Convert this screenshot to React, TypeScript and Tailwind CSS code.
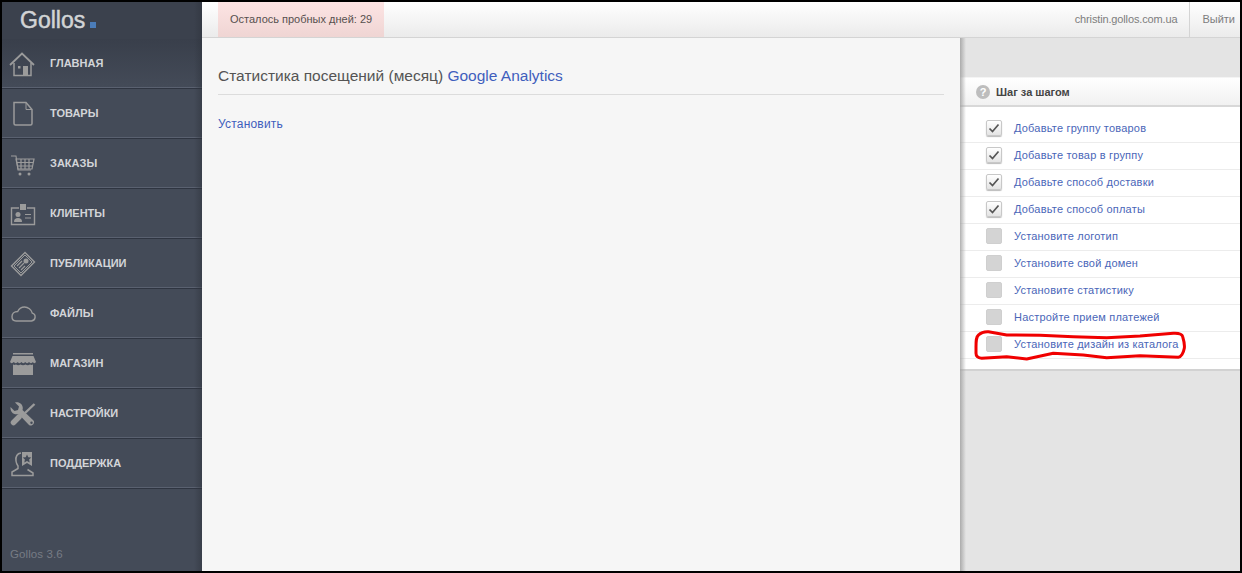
import type { ReactNode } from 'react';

const iconProps = {
  width: 30,
  height: 30,
  viewBox: '0 0 30 30',
  fill: 'none',
  stroke: '#9b9b9b',
  strokeWidth: 1.4,
};

const HomeIcon = () => (
  <svg {...iconProps}>
    <path d="M2 16 14 4.500 26 16" strokeWidth={1.8} />
    <path d="M6 14v12.500h17V14" strokeWidth={1.5} />
    <path d="M15 17h5v9.500h-5zM10 17h2.500v2.500H10z" fill="#9b9b9b" stroke="none" />
  </svg>
);

const FileIcon = () => (
  <svg {...iconProps}>
    <path d="M6 3.500h12l6 7v14a1.500 1.500 0 0 1-1.500 1.500H7.500A1.500 1.500 0 0 1 6 24.500z" strokeWidth={1.5} />
    <path d="M18 3.500v7h6" strokeWidth={1} />
  </svg>
);

const CartIcon = () => (
  <svg {...iconProps}>
    <path d="M3 7h5l2 14h13" strokeWidth={1.1} />
    <path d="M8 10h18l-2 10H10zM8.500 13.500h17M9 17h16M13 10v10M17 10v10M21 10v10" strokeWidth={1.2} />
    <circle cx="12" cy="25" r="1.500" fill="#9b9b9b" stroke="none" />
    <circle cx="21" cy="25" r="1.500" fill="#9b9b9b" stroke="none" />
  </svg>
);

const ClientIcon = () => (
  <svg {...iconProps}>
    <path d="M11 9H3.500v16.500h23V9H19" strokeWidth={1.4} />
    <rect x="12" y="5" width="6" height="6" fill="#9b9b9b" stroke="none" />
    <circle cx="10" cy="15.500" r="2.500" fill="#9b9b9b" stroke="none" />
    <path d="M6 23c0-3 1.500-4 4-4s4 1 4 4z" fill="#9b9b9b" stroke="none" />
    <path d="M17 15.500h6M17 19h6" strokeWidth={1.2} />
  </svg>
);

const TicketIcon = () => (
  <svg {...iconProps}>
    <path d="M3.500 17 17 3.500l9.500 9.500L13 26.500z" strokeWidth={1.4} />
    <path d="M6 17 17 6l7 7-11 11z" strokeWidth={1} />
    <circle cx="18" cy="12" r="2.500" fill="#9b9b9b" stroke="none" />
    <path d="M9 17l5-5M11 19l5-5M13 21l4-4" strokeWidth={1.2} />
  </svg>
);

const CloudIcon = () => (
  <svg {...iconProps}>
    <path d="M8 22h15.500a4 4 0 0 0 .8-7.800C23.500 10.500 20 8 16.500 8c-3 0-5.500 1.800-6.800 4.500C6 12.500 4 15 4 17.500 4 20 5.500 22 8 22z" strokeWidth={1.4} />
  </svg>
);

const ShopIcon = () => (
  <svg {...iconProps}>
    <path d="M5 4h20v1.500H5z" fill="#9b9b9b" stroke="none" />
    <path d="M4.500 7h21L28 13c-.8 1.500-2.500 1.500-3.200 0-.7 1.500-3 1.500-3.800 0-.8 1.500-3 1.500-3.800 0-.8 1.500-3 1.500-3.800 0-.8 1.500-3 1.500-3.800 0-.7 1.500-3 1.500-3.800 0C4.500 14.500 2.800 14.500 2 13z" fill="#9b9b9b" stroke="none" />
    <path d="M5 15.500c1 .5 2 .5 3 0 1.500 1 3 1 4.500 0 1.500 1 3.500 1 5 0 1.500 1 3 1 4.500 0 1 .5 2 .5 3 0V26H5z" fill="#9b9b9b" stroke="none" />
  </svg>
);

const ToolsIcon = () => (
  <svg {...iconProps}>
    {/* wrench */}
    <path d="M2.500 8 6.500 12l3.500-1 1-3.500-4-4C11 2.500 15 5 14.800 9.500l-.3 1.500 11 10.500c2 2.500-1.500 6.500-4.500 4.500L10.500 15C6 16.500 2 13 2.500 8z" fill="#9b9b9b" stroke="none" />
    <circle cx="23.500" cy="23.800" r="1.200" fill="#444b58" stroke="none" />
    {/* screwdriver */}
    <path d="M26.500 5 17 14" strokeWidth={2.400} />
    <path d="M11 18 5.500 23.500" strokeWidth={5.500} strokeLinecap="round" />
  </svg>
);

const SupportIcon = () => (
  <svg {...iconProps}>
    <path d="M13 4C9 4.500 7.500 8 8 12c.2 2 1 3.500 2 5v2.500L4 23v3.500h21V24l-5.500-3.500" strokeWidth={1.5} />
    <path d="M14 3h10v14l-5-3-5 3z" fill="#9b9b9b" stroke="none" />
    <path d="m19 5.500 1.300 2.800 3 .3-2.200 2 .6 3-2.700-1.500-2.700 1.500.6-3-2.200-2 3-.3z" fill="#434a57" stroke="none" />
  </svg>
);

const menu: { label: string; icon: ReactNode }[] = [
  { label: 'Главная', icon: <HomeIcon /> },
  { label: 'Товары', icon: <FileIcon /> },
  { label: 'Заказы', icon: <CartIcon /> },
  { label: 'Клиенты', icon: <ClientIcon /> },
  { label: 'Публикации', icon: <TicketIcon /> },
  { label: 'Файлы', icon: <CloudIcon /> },
  { label: 'Магазин', icon: <ShopIcon /> },
  { label: 'Настройки', icon: <ToolsIcon /> },
  { label: 'Поддержка', icon: <SupportIcon /> },
];

const steps = [
  { label: 'Добавьте группу товаров', done: true },
  { label: 'Добавьте товар в группу', done: true },
  { label: 'Добавьте способ доставки', done: true },
  { label: 'Добавьте способ оплаты', done: true },
  { label: 'Установите логотип', done: false },
  { label: 'Установите свой домен', done: false },
  { label: 'Установите статистику', done: false },
  { label: 'Настройте прием платежей', done: false },
  { label: 'Установите дизайн из каталога', done: false },
];

function Sidebar() {
  return (
    <aside className="relative flex w-[200px] shrink-0 flex-col bg-[#444b58]">
      {/* Logo */}
      <div className="flex h-[37px] items-center bg-[#3b414d] pl-[18px]">
        <span className="text-[23px] leading-none font-normal text-[#d2d4d6] [-webkit-text-stroke:0.5px_#d2d4d6]">Gollos</span>
        <span className="mt-[9px] ml-[5px] h-[6px] w-[6px] bg-[#4b7cb8]" />
      </div>

      {/* Navigation */}
      <nav className="flex flex-col">
        {menu.map((item, i) => (
          <a
            key={item.label}
            href="#"
            className={`flex h-[50px] items-center gap-[12px] border-b border-b-[#2f3541] pl-[6px] shadow-[inset_0_-1px_0_#5a6170] ${
              i === 0 ? 'bg-gradient-to-b from-[#393f4b] to-[#444b58]' : ''
            }`}
          >
            {item.icon}
            <span className="text-[11px] font-bold text-[#d3d5d8] uppercase">{item.label}</span>
          </a>
        ))}
      </nav>

      <div className="mt-auto pb-[8px] pl-[8px] text-[11.5px] tracking-[0.1px] text-[#777c85]">Gollos 3.6</div>

      {/* Shadow on the sidebar's right edge */}
      <div className="pointer-events-none absolute top-0 right-0 bottom-0 w-[8px] bg-gradient-to-r from-transparent to-[#2d323b]/50" />
    </aside>
  );
}

function TopBar() {
  return (
    <header className="flex h-[36px] shrink-0 items-stretch justify-between border-b border-b-[#d4d4d4] bg-gradient-to-b from-white to-[#ebebeb] text-[11px]">
      <div className="ml-[16px] flex items-center bg-gradient-to-b from-[#fde4e4] to-[#efd5d3] px-[12px] text-[#56504e]">
        Осталось пробных дней: 29
      </div>
      <div className="flex items-center text-[#7d7d7d]">
        <a href="#" className="pr-[12px] tracking-[-0.14px]">christin.gollos.com.ua</a>
        <a href="#" className="flex h-full items-center border-l border-l-[#d4d4d4] pr-[5px] pl-[12px]">Выйти</a>
      </div>
    </header>
  );
}

function Stats() {
  return (
    <section className="w-[758px] shrink-0 bg-[#f6f6f6] px-[16px] pt-[27px]">
      <h2 className="border-b border-b-[#dcdcdc] pb-[8px] text-[15.5px] leading-[21px] font-normal text-[#545454]">
        Статистика посещений (месяц) <a href="#" className="text-[#3f5ebd]">Google Analytics</a>
      </h2>
      <a href="#" className="mt-[21px] block text-[12px] leading-[16px] tracking-[0.2px] text-[#3f5ebd]">Установить</a>
    </section>
  );
}

function Steps() {
  return (
    <section className="relative flex-1 bg-[#e4e4e4] pt-[39px]">
      <div className="border-t border-b-2 border-t-[#f4f4f4] border-b-[#d2d2d2] bg-white pb-[10px]">
        <div className="flex h-[29px] items-center gap-[6px] border-b-2 border-b-[#d8d8d8] bg-gradient-to-b from-white to-[#f1f1f1] pt-[1px] pl-[16px] text-[11px] font-bold text-[#444]">
          <span className="flex h-[14px] w-[14px] items-center justify-center rounded-full bg-[#bdbdbd] text-[11px] leading-none text-white">?</span>
          Шаг за шагом
        </div>
        <ul className="pt-[9px]">
          {steps.map((s) => (
            <li key={s.label} className="flex h-[27px] items-center gap-[12px] border-b border-b-[#ececec] pb-[1px] pl-[26px]">
              <span
                className={`-mt-[1px] flex h-[16px] w-[16px] items-center justify-center rounded-[2px] border ${
                  s.done ? 'border-[#c8c8c8] bg-gradient-to-b from-white to-[#e4e4e4] shadow-[0_1px_1px_#bbb]' : 'border-[#cfcfcf] bg-[#d4d4d4]'
                }`}
              >
                {s.done && (
                  <svg width="12" height="12" viewBox="0 0 12 12" fill="none" stroke="#555" strokeWidth="1.700">
                    <path d="M1.500 6.500 4.500 9.500 10.500 2.500" />
                  </svg>
                )}
              </span>
              <a href="#" className="text-[11px] tracking-[0.2px] text-[#4a66b8]">{s.label}</a>
            </li>
          ))}
        </ul>
      </div>

      {/* Left edge shadow */}
      <div className="pointer-events-none absolute top-0 bottom-0 left-0 w-[6px] bg-gradient-to-r from-[#9d9d9d]/80 to-transparent" />

      {/* Red hand-drawn annotation */}
      <svg className="pointer-events-none absolute top-[291px] left-[12px]" width="216" height="34" viewBox="0 0 216 34" fill="none">
        <path
          d="M4 18C4 12 4 8 6.500 6 9 3.500 13 2.500 16.500 2.700L34.700 6 68 6.300 101.300 7.700 134.700 8.700 168 7 201.300 4.300C207 4 210 5 210.700 7.700 212 12 212.800 16 212.300 19.300 211.500 24 209 28 206.300 28.300L168 26.700 134.700 28.700 111.300 26 81.300 24.300 54.700 30 34.700 27.700 9.700 29.300C6 29 4 27 4 24.300Z"
          stroke="#f00000"
          strokeWidth="3"
          strokeLinejoin="round"
        />
      </svg>
    </section>
  );
}

export default function App() {
  return (
    <div className="flex h-[573px] w-[1242px] overflow-hidden border-2 border-black font-['Liberation_Sans',Arial,sans-serif]">
      <Sidebar />
      <div className="flex min-w-0 flex-1 flex-col">
        <TopBar />
        <main className="flex flex-1">
          <Stats />
          <Steps />
        </main>
      </div>
    </div>
  );
}
